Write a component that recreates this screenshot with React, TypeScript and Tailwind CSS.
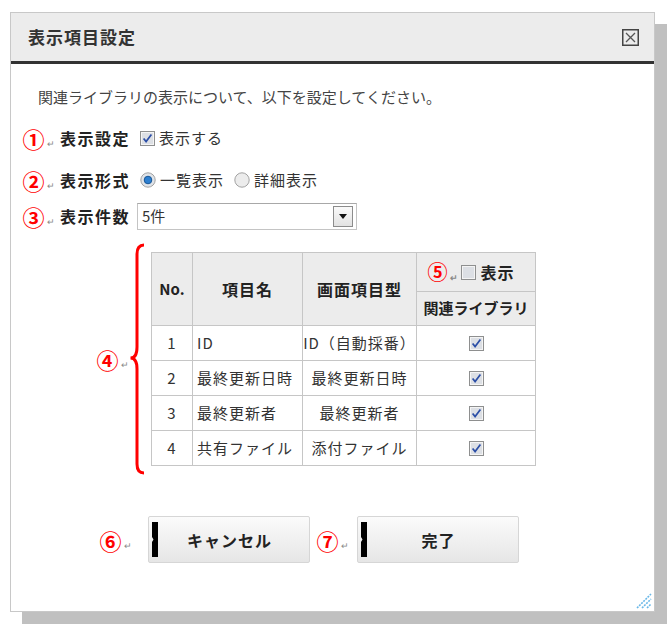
import React from 'react'

function Circled({ n }: { n: string }) {
  return (
    <span className="flex items-end">
      <span className="text-[22px] leading-none font-bold text-[#ff0000] w-[21px] flex justify-center">{n}</span>
      <span className="text-[9px] leading-none text-[#888] ml-[3px] mb-[1px]">↵</span>
    </span>
  )
}

function CheckBox({ checked }: { checked?: boolean }) {
  return (
    <svg width="15" height="15" viewBox="0 0 15 15" className="shrink-0">
      <rect x="0.5" y="0.5" width="14" height="14" fill="#f4f4f4" stroke="#8e8f8f" />
      <rect x="2" y="2" width="11" height="11" fill="#dcdfe4" />
      {checked && <path d="M3.6 7.4 L6.1 10.6 L11.4 3.6" stroke="#2b4ea6" strokeWidth="1.7" fill="none" />}
    </svg>
  )
}

function Radio({ on }: { on?: boolean }) {
  return (
    <svg width="16" height="16" viewBox="0 0 16 16" className="shrink-0">
      <circle cx="8" cy="8" r="7.2" fill={on ? '#dfe3e8' : '#ececec'} stroke="#a2a2a2" />
      {on && <circle cx="8" cy="8" r="3.8" fill="#2d7fd0" stroke="#0f4e8e" strokeWidth="0.9" />}
    </svg>
  )
}

function CloseIcon() {
  return (
    <svg width="17" height="17" viewBox="0 0 17 17">
      <rect x="0.75" y="0.75" width="15.5" height="15.5" fill="none" stroke="#444" strokeWidth="1.5" />
      <path d="M4 4 L13 13 M13 4 L4 13" stroke="#555" strokeWidth="1.3" />
    </svg>
  )
}

function Brace() {
  return (
    <svg width="16" height="232" viewBox="0 0 16 232" className="shrink-0">
      <path
        d="M15 2 Q8 2 8 11 L8 104 Q8 115 1.5 115 Q8 115 8 126 L8 221 Q8 230 15 230"
        stroke="#ff0000"
        strokeWidth="3"
        fill="none"
      />
    </svg>
  )
}

function Button({ label }: { label: string }) {
  return (
    <button className="flex items-center w-[162px] h-[47px] border border-[#d6d6d6] rounded-[2px] bg-gradient-to-b from-[#fbfbfb] to-[#e6e6e6]">
      <svg width="9" height="35" viewBox="0 0 9 35" className="ml-[1px] shrink-0">
        <path d="M2 0 H8 V35 H2 V20 L3.5 17.5 L2 15 Z" fill="#000" />
      </svg>
      <span className="flex-1 text-center pr-[9px] text-[16px] font-bold text-[#222] tracking-[1px]">{label}</span>
    </button>
  )
}

const rows = [
  { no: '1', name: 'ID', type: 'ID（自動採番）' },
  { no: '2', name: '最終更新日時', type: '最終更新日時' },
  { no: '3', name: '最終更新者', type: '最終更新者' },
  { no: '4', name: '共有ファイル', type: '添付ファイル' },
]

export default function App() {
  return (
    <div className="min-h-screen bg-white pt-[12px] pl-[10px] font-['Noto_Sans_CJK_JP',sans-serif] text-[#333]">
      <div className="relative w-[645px] h-[600px] border border-[#c8c8c8] bg-white shadow-[12px_12px_0_0_#c0c0c0] flex flex-col">
        <div className="h-[51px] bg-[#ececec] border-b-[3px] border-[#333] flex items-center justify-between pl-[17px] pr-[15px]">
          <span className="text-[17px] font-bold text-[#333] tracking-[1px]">表示項目設定</span>
          <CloseIcon />
        </div>

        <div className="flex flex-col pl-[12px]">
          <p className="mt-[22px] h-[22px] leading-[22px] pl-[15px] text-[15px] text-[#444]">
            関連ライブラリの表示について、以下を設定してください。
          </p>

          <div className="mt-[16px] h-[28px] flex items-center">
            <Circled n="①" />
            <span className="ml-[5px] text-[16px] font-bold tracking-[1.5px] text-[#222]">表示設定</span>
            <span className="ml-[10px] flex items-center gap-[4px]">
              <CheckBox checked />
              <span className="text-[15px] tracking-[1px]">表示する</span>
            </span>
          </div>

          <div className="mt-[14px] h-[28px] flex items-center">
            <Circled n="②" />
            <span className="ml-[5px] text-[16px] font-bold tracking-[1.5px] text-[#222]">表示形式</span>
            <span className="ml-[10px] flex items-center gap-[4px]">
              <Radio on />
              <span className="text-[15px] tracking-[1px]">一覧表示</span>
            </span>
            <span className="ml-[10px] flex items-center gap-[4px]">
              <Radio />
              <span className="text-[15px] tracking-[1px]">詳細表示</span>
            </span>
          </div>

          <div className="mt-[8px] h-[28px] flex items-center">
            <Circled n="③" />
            <span className="ml-[5px] text-[16px] font-bold tracking-[1.5px] text-[#222]">表示件数</span>
            <div className="ml-[7px] w-[220px] h-[27px] border border-[#c4c4c4] border-t-[#a8a8a8] bg-white flex items-center justify-between pl-[4px] pr-[3px]">
              <span className="text-[15px]">5件</span>
              <div className="w-[20px] h-[21px] border border-[#8c8c8c] bg-gradient-to-b from-[#fafafa] to-[#e2e2e2] flex items-center justify-center">
                <svg width="8" height="5" viewBox="0 0 8 5">
                  <path d="M0 0 L8 0 L4 5 Z" fill="#111" />
                </svg>
              </div>
            </div>
          </div>

          <div className="mt-[13px] flex items-center pl-[74px]">
            <Circled n="④" />
            <Brace />
            <table className="ml-[6px] border-collapse border border-[#c6c6c6] text-[15px] tracking-[1px]">
              <thead>
                <tr className="h-[39px] bg-[#ececec]">
                  <th rowSpan={2} className="w-[41px] border border-[#c6c6c6] text-[15px] font-bold text-[#222] tracking-normal">No.</th>
                  <th rowSpan={2} className="w-[110px] border border-[#c6c6c6] text-[16px] font-bold text-[#222]">項目名</th>
                  <th rowSpan={2} className="w-[114px] border border-[#c6c6c6] text-[16px] font-bold text-[#222]">画面項目型</th>
                  <th className="w-[119px] border border-[#c6c6c6] font-bold text-[#222]">
                    <div className="flex items-center justify-center gap-[2px] pr-[10px]">
                      <span className="text-[20px] leading-none font-bold text-[#ff0000]">⑤</span>
                      <span className="text-[9px] text-[#888] self-end">↵</span>
                      <CheckBox />
                      <span className="text-[16px] ml-[2px]">表示</span>
                    </div>
                  </th>
                </tr>
                <tr className="h-[34px] bg-[#ececec]">
                  <th className="border border-[#c6c6c6] text-[15px] font-bold text-[#222] tracking-normal">関連ライブラリ</th>
                </tr>
              </thead>
              <tbody>
                {rows.map((r) => (
                  <tr key={r.no} className="h-[35px]">
                    <td className="border border-[#c6c6c6] text-center">{r.no}</td>
                    <td className="border border-[#c6c6c6] pl-[4px]">{r.name}</td>
                    <td className="border border-[#c6c6c6] text-center">{r.type}</td>
                    <td className="border border-[#c6c6c6]">
                      <div className="flex justify-center">
                        <CheckBox checked />
                      </div>
                    </td>
                  </tr>
                ))}
              </tbody>
            </table>
          </div>

          <div className="mt-[41px] flex items-center pl-[77px]">
            <Circled n="⑥" />
            <div className="ml-[16px]">
              <Button label="キャンセル" />
            </div>
            <div className="ml-[7px]">
              <Circled n="⑦" />
            </div>
            <div className="ml-[8px]">
              <Button label="完了" />
            </div>
          </div>
        </div>

        <svg width="16" height="16" viewBox="0 0 16 16" className="absolute right-[2px] bottom-[2px]">
          <path d="M1 15 L15 1 M6 15 L15 6 M11 15 L15 11" stroke="#6ab8e8" strokeWidth="1.6" strokeDasharray="2 1" />
        </svg>
      </div>
    </div>
  )
}
